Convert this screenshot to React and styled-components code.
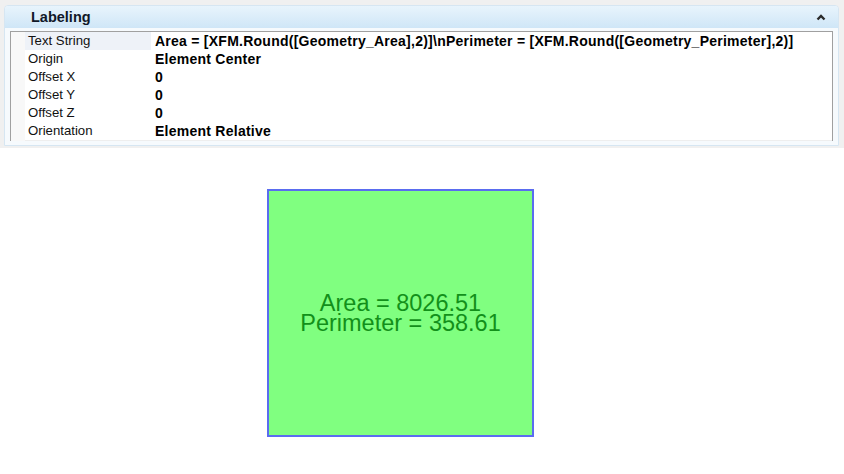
import React from 'react';
import styled, { createGlobalStyle } from 'styled-components';

const GlobalStyle = createGlobalStyle`
  html, body {
    margin: 0;
    padding: 0;
    background: #ffffff;
    font-family: "Liberation Sans", Arial, sans-serif;
  }
`;

const TopArea = styled.div`
  background: #f0f0f0;
  padding: 5px 5px 2px 4px;
`;

const Panel = styled.div`
  background: #f6fafd;
  border: 1px solid #d6e6f2;
  border-radius: 4px 4px 0 0;
`;

const Header = styled.div`
  height: 22px;
  display: flex;
  align-items: center;
  justify-content: space-between;
  padding: 0 12px 0 26px;
  background: linear-gradient(#e8f4fc, #cfe6f7);
  border-radius: 3px 3px 0 0;
  font-size: 14.5px;
  font-weight: bold;
  color: #101828;
`;

const Body = styled.div`
  padding: 3px 5px 4px 5px;
`;

const Grid = styled.div`
  border: 1px solid #a0a0a0;
  background: #fbfbfb;
`;

const Row = styled.div`
  display: grid;
  grid-template-columns: 14px 126px 1fr;
  height: 18px;
  line-height: 18px;
  color: #111;
`;

const Gutter = styled.div`
  background: #f8f8f8;
`;

const Label = styled.div`
  padding-left: 3px;
  font-size: 13.2px;
  background: ${p => (p.$selected ? '#eef2f8' : '#ffffff')};
  border-bottom: 1px solid #eeeeee;
  white-space: nowrap;
`;

const Value = styled.div`
  padding-left: 4px;
  font-size: 14px;
  letter-spacing: 0.25px;
  background: #ffffff;
  border-bottom: 1px solid #eeeeee;
  font-weight: bold;
  color: #000;
  white-space: nowrap;
`;

const Canvas = styled.div`
  padding: 41px 0 0 267px;
  height: 300px;
`;

const Shape = styled.div`
  width: 263px;
  height: 244px;
  background: #80ff80;
  border: 2px solid #5a6cf0;
  display: flex;
  align-items: center;
  justify-content: center;
`;

const ShapeLabel = styled.div`
  text-align: center;
  color: #12901a;
  font-size: 23.5px;
  line-height: 20px;
`;

const rows = [
  ['Text String', 'Area = [XFM.Round([Geometry_Area],2)]\\nPerimeter = [XFM.Round([Geometry_Perimeter],2)]'],
  ['Origin', 'Element Center'],
  ['Offset X', '0'],
  ['Offset Y', '0'],
  ['Offset Z', '0'],
  ['Orientation', 'Element Relative'],
];

function Chevron() {
  return (
    <svg width="10" height="8" viewBox="0 0 10 8">
      <polyline points="1.5,6.5 5,3 8.5,6.5" fill="none" stroke="#2a2a2a" strokeWidth="2.4" />
    </svg>
  );
}

export default function App() {
  return (
    <>
      <GlobalStyle />
      <TopArea>
        <Panel>
          <Header>
            <span>Labeling</span>
            <Chevron />
          </Header>
          <Body>
            <Grid>
              {rows.map(([k, v], i) => (
                <Row key={k}>
                  <Gutter />
                  <Label $selected={i === 0}>{k}</Label>
                  <Value>{v}</Value>
                </Row>
              ))}
            </Grid>
          </Body>
        </Panel>
      </TopArea>
      <Canvas>
        <Shape>
          <ShapeLabel>
            Area = 8026.51
            <br />
            Perimeter = 358.61
          </ShapeLabel>
        </Shape>
      </Canvas>
    </>
  );
}
